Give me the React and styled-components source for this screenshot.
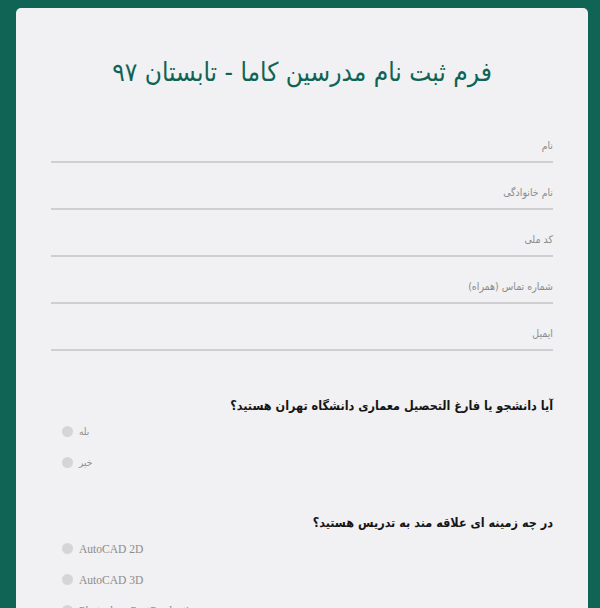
import React from "react";
import styled, { createGlobalStyle } from "styled-components";

const GlobalStyle = createGlobalStyle`
  html, body {
    margin: 0;
    padding: 0;
    background: #0f6455;
  }
`;

const App = () => {
  const fields = [
    { id: 1, label: "نام" },
    { id: 2, label: "نام خانوادگی" },
    { id: 3, label: "کد ملی" },
    { id: 4, label: "شماره تماس (همراه)" },
    { id: 5, label: "ایمیل" },
  ];

  const questions = [
    {
      id: 1,
      title: "آیا دانشجو یا فارغ التحصیل معماری دانشگاه تهران هستید؟",
      options: ["بله", "خیر"],
      persian: true,
    },
    {
      id: 2,
      title: "در چه زمینه ای علاقه مند به تدریس هستید؟",
      options: ["AutoCAD 2D", "AutoCAD 3D", "Photoshop PostProduction", "3ds Max"],
      persian: false,
    },
  ];

  const renderFields = () => {
    return fields.map((field) => (
      <FieldStyled key={field.id}>
        <LabelStyled>{field.label}</LabelStyled>
      </FieldStyled>
    ));
  };

  const renderQuestions = () => {
    return questions.map((q) => (
      <QuestionStyled key={q.id}>
        <QuestionTitle>{q.title}</QuestionTitle>
        {q.options.map((opt) => (
          <OptionStyled key={opt}>
            <Radio />
            <OptionLabel $persian={q.persian}>{opt}</OptionLabel>
          </OptionStyled>
        ))}
      </QuestionStyled>
    ));
  };

  return (
    <PageStyled>
      <GlobalStyle />
      <CardStyled>
        <TitleStyled>فرم ثبت نام مدرسین کاما - تابستان ۹۷</TitleStyled>
        <FieldsStyled>{renderFields()}</FieldsStyled>
        {renderQuestions()}
      </CardStyled>
    </PageStyled>
  );
};

const PageStyled = styled.div`
  height: 608px;
  overflow: hidden;
  padding: 8px 12px 0 16px;
  box-sizing: border-box;
`;

const CardStyled = styled.div`
  background: #f1f0f2;
  border-radius: 5px;
  padding: 40px 35px 40px 35px;
  min-height: 700px;
  direction: rtl;
  font-family: "DejaVu Sans Condensed", "DejaVu Sans", sans-serif;
`;

const TitleStyled = styled.h1`
  margin: 0;
  font-size: 26px;
  line-height: 48px;
  font-weight: normal;
  color: #0e6454;
  text-align: center;
`;

const FieldsStyled = styled.div`
  margin-top: 20px;
`;

const FieldStyled = styled.div`
  height: 47px;
  box-sizing: border-box;
  display: flex;
  align-items: flex-end;
  padding-bottom: 9px;
  border-bottom: 2px solid #cfcfd1;
`;

const LabelStyled = styled.span`
  font-size: 10.5px;
  line-height: 14px;
  color: #8c8c8c;
`;

const QuestionStyled = styled.div`
  margin-top: 45px;

  & + & {
    margin-top: 35px;
  }
`;

const QuestionTitle = styled.div`
  font-size: 12.5px;
  line-height: 20px;
  font-weight: bold;
  color: #151515;
`;

const OptionStyled = styled.div`
  direction: ltr;
  display: flex;
  align-items: center;
  height: 31px;
  padding-left: 11px;
  gap: 6px;
`;

const Radio = styled.span`
  width: 11px;
  height: 11px;
  border-radius: 50%;
  background: #d5d5d7;
`;

const OptionLabel = styled.span`
  font-family: ${(p) =>
    p.$persian
      ? '"DejaVu Sans Condensed", "DejaVu Sans", sans-serif'
      : '"Liberation Serif", serif'};
  font-size: ${(p) => (p.$persian ? "10px" : "11.5px")};
  color: #8c8c8c;
`;

export default App;
